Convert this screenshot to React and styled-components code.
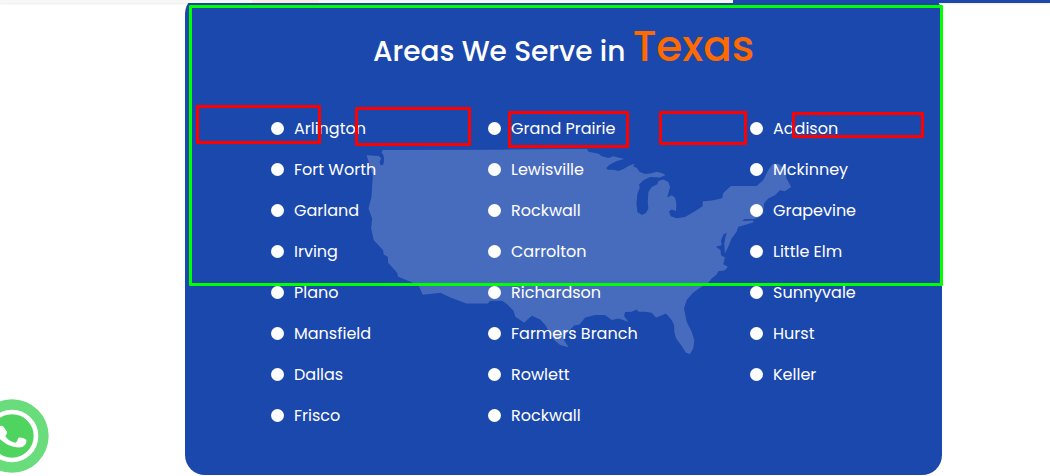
import React from "react";
import styled, { createGlobalStyle } from "styled-components";

const GlobalStyle = createGlobalStyle`
  * { box-sizing: border-box; }
  body {
    margin: 0;
    background: #fff;
    font-family: Poppins, Inter, "Liberation Sans", sans-serif;
    overflow-x: hidden;
  }
`;

const Header = styled.header`
  position: fixed;
  inset: 0 0 auto 0;
  z-index: 2;
  height: 3px;
  display: grid;
  grid-template-columns: 252fr 67fr 414fr 317fr;
  box-shadow: 0 1px 2px rgba(0, 0, 0, 0.08);
`;

const HeaderPart = styled.div`
  background: ${(p) => p.$color};
`;

const Page = styled.main`
  display: grid;
  grid-template-columns: 185fr 757fr 108fr;
`;

const Card = styled.section`
  grid-column: 2;
  position: relative;
  margin-top: -6px;
  padding: 26px 0 39px;
  border-radius: 20px;
  background: #1b48ad;
  color: #fff;
`;

const Title = styled.h2`
  position: relative;
  margin: 0;
  font-size: 28px;
  line-height: 64px;
  font-weight: 500;
  text-align: center;
`;

const Accent = styled.span`
  font-size: 42px;
  line-height: 1;
  color: #ff6a00;
`;

const Columns = styled.div`
  position: relative;
  display: grid;
  grid-template-columns: 217fr 262fr 192fr;
  margin-top: 24px;
  padding-left: 86px;
`;

const List = styled.ul`
  margin: 0;
  padding: 0;
  list-style: none;
`;

const Item = styled.li`
  display: flex;
  align-items: center;
  gap: 10px;
  height: 41px;
  font-size: 16px;
  white-space: nowrap;

  &::before {
    content: "";
    width: 13px;
    height: 13px;
    border-radius: 50%;
    background: #fff;
  }
`;

const CountryMap = styled.svg`
  position: absolute;
  left: 180px;
  top: 153px;
  width: 427px;
  height: 208px;
  fill: rgba(255, 255, 255, 0.2);
`;

const Marker = styled.div`
  position: absolute;
  left: ${(p) => p.$x}px;
  top: ${(p) => p.$y}px;
  width: ${(p) => p.$w}px;
  height: ${(p) => p.$h}px;
  border: 3px solid ${(p) => p.$color};
  border-radius: 1px;
  pointer-events: none;
`;

const ChatLink = styled.a`
  position: fixed;
  left: -25px;
  bottom: 3px;
  width: 74px;
  height: 74px;

  svg {
    display: block;
    width: 100%;
    height: 100%;
  }
`;

const areas = [
  ["Arlington", "Fort Worth", "Garland", "Irving", "Plano", "Mansfield", "Dallas", "Frisco"],
  ["Grand Prairie", "Lewisville", "Rockwall", "Carrolton", "Richardson", "Farmers Branch", "Rowlett", "Rockwall"],
  ["Addison", "Mckinney", "Grapevine", "Little Elm", "Sunnyvale", "Hurst", "Keller"],
];

const markers = [
  { x: 11, y: 111, w: 125, h: 39 },
  { x: 170, y: 113, w: 116, h: 39 },
  { x: 323, y: 117, w: 121, h: 37 },
  { x: 474, y: 117, w: 88, h: 34 },
  { x: 607, y: 118, w: 132, h: 26 },
];

const mapOutline =
  "M48 45L85 47L92 54L87 66L91 75L98 74L101 60L99 44L93 37L97 29L450 28L702 26L710 25L715 34L735 38L745 40L755 48L775 53L790 48L822 56L800 62L778 73L768 84L773 88L790 88L805 92L820 86L835 77L853 70L850 79L860 82L868 94L885 101L905 99L920 94L935 98L947 104L930 112L900 110L880 120L867 133L869 143L862 160L859 190L862 215L875 224L888 218L895 205L893 185L895 155L905 140L922 132L925 122L940 118L955 125L960 140L955 158L952 172L965 165L975 172L979 190L978 212L965 208L957 213L962 228L980 234L1005 230L1035 213L1058 198L1058 184L1090 180L1117 174L1120 158L1143 137L1220 137L1240 120L1255 90L1268 72L1285 70L1305 85L1310 115L1324 140L1305 153L1290 150L1275 165L1255 175L1242 190L1240 220L1225 232L1212 236L1184 236L1177 242L1210 241L1211 246L1180 256L1165 260L1160 275L1145 295L1135 320L1125 340L1123 310L1127 290L1131 278L1121 282L1113 300L1115 315L1098 320L1112 330L1113 345L1125 352L1120 372L1134 380L1125 390L1105 393L1100 403L1085 415L1075 428L1055 440L1030 457L1010 480L1002 505L1010 545L1025 575L1033 600L1030 625L1020 642L1008 638L995 618L978 595L973 575L972 555L965 540L948 520L930 528L918 532L905 518L885 515L865 515L860 508L845 515L825 516L822 528L835 546L820 540L805 535L785 540L765 525L735 525L705 532L688 553L672 556L650 580L640 598L655 622L630 615L612 600L600 580L585 555L570 538L545 527L530 540L522 548L495 530L490 512L470 492L455 482L420 482L412 490L348 490L300 472L270 458L217 464L205 437L180 425L143 410L140 398L113 368L112 350L100 343L98 330L70 300L62 265L65 235L54 205L63 170L67 105L58 75Z";

export default function App() {
  return (
    <>
      <GlobalStyle />
      <Header>
        <HeaderPart $color="#f7f7f8" />
        <HeaderPart $color="#fce9df" />
        <HeaderPart $color="#f7f7f8" />
        <HeaderPart $color="#1b48ad" />
      </Header>
      <Page>
        <Card>
          <CountryMap viewBox="45 20 1280 625" aria-hidden="true">
            <path d={mapOutline} />
          </CountryMap>
          <Title>
            Areas We Serve in <Accent>Texas</Accent>
          </Title>
          <Columns>
            {areas.map((names, c) => (
              <List key={c}>
                {names.map((name, i) => (
                  <Item key={i}>{name}</Item>
                ))}
              </List>
            ))}
          </Columns>
          {markers.map((m) => (
            <Marker key={m.x} $x={m.x} $y={m.y} $w={m.w} $h={m.h} $color="#f00" />
          ))}
          <Marker $x={4} $y={11} $w={754} $h={281} $color="#0f0" />
        </Card>
      </Page>
      <ChatLink href="#chat" aria-label="WhatsApp">
        <svg viewBox="-76 56 222 222">
          <circle cx="35" cy="167" r="110" fill="#69dc7c" />
          <circle cx="35" cy="167" r="72" fill="#4fd45f" stroke="#fff" strokeWidth="14" />
          <path
            fill="#fff"
            d="M-6 140C-1 134 9 135 12 143L20 154C22 160 14 164 16 169C23 179 34 185 45 187C52 184 51 176 55 172C60 170 72 174 76 177C80 181 78 187 76 191C70 202 56 203 44 200C18 195 0 180 -10 164C-16 155 -13 146 -6 140Z"
          />
        </svg>
      </ChatLink>
    </>
  );
}
